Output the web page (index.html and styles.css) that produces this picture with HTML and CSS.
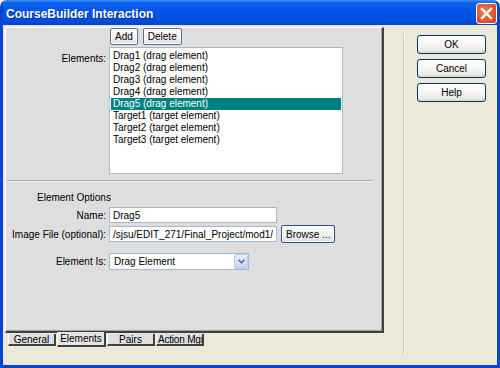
FILE: index.html
```html
<!DOCTYPE html>
<html lang="en">
<head>
    <meta charset="UTF-8">
    <title>CourseBuilder Interaction</title>
    <link rel="stylesheet" href="styles.css">
</head>
<body>
<div class="window">
    <div class="titlebar">
        <span class="title">CourseBuilder Interaction</span>
        <button class="close" type="button" aria-label="Close">
            <svg width="13" height="13" viewBox="0 0 13 13">
                <path d="M2 2 L11 11 M11 2 L2 11" stroke="#fff" stroke-width="2.4" stroke-linecap="square"/>
            </svg>
        </button>
    </div>
    <div class="frame">
        <div class="main">
            <div class="panel">
                <div class="toolbar">
                    <button type="button" class="small-btn">Add</button>
                    <button type="button" class="small-btn">Delete</button>
                </div>
                <div class="row row-list">
                    <label class="label label-list">Elements:</label>
                    <ul class="listbox">
                        <li>Drag1 (drag element)</li>
                        <li>Drag2 (drag element)</li>
                        <li>Drag3 (drag element)</li>
                        <li>Drag4 (drag element)</li>
                        <li class="selected">Drag5 (drag element)</li>
                        <li>Target1 (target element)</li>
                        <li>Target2 (target element)</li>
                        <li>Target3 (target element)</li>
                    </ul>
                </div>
                <div class="separator"></div>
                <div class="group-title">Element Options</div>
                <div class="row row-name">
                    <label class="label" for="name">Name:</label>
                    <input type="text" id="name" class="field field-name" value="Drag5">
                </div>
                <div class="row row-image">
                    <label class="label" for="image">Image File (optional):</label>
                    <input type="text" id="image" class="field field-name" value="/sjsu/EDIT_271/Final_Project/mod1/images/drag5.gif">
                    <button type="button" class="small-btn browse">Browse ...</button>
                </div>
                <div class="row row-kind">
                    <label class="label">Element Is:</label>
                    <div class="combo">
                        <span class="combo-text">Drag Element</span>
                        <span class="combo-arrow">
                            <svg width="7" height="5" viewBox="0 0 7 5">
                                <path d="M0.5 0.8 L3.5 3.8 L6.5 0.8" fill="none" stroke="#4d6185" stroke-width="1.4"/>
                            </svg>
                        </span>
                    </div>
                </div>
            </div>
            <div class="tabs">
                <div class="tab">General</div>
                <div class="tab active">Elements</div>
                <div class="tab">Pairs</div>
                <div class="tab tab-clip">Action Mgr</div>
            </div>
        </div>
        <div class="side">
            <div class="vline"></div>
            <div class="actions">
                <button type="button" class="xp-btn">OK</button>
                <button type="button" class="xp-btn">Cancel</button>
                <button type="button" class="xp-btn">Help</button>
            </div>
        </div>
    </div>
</div>
</body>
</html>
```

FILE: styles.css
```css
/* Global styles */
body {
    margin: 0;
    font-family: "Liberation Sans", Arial, sans-serif;
    font-size: 10px;
    color: #000;
    background: #fff;
}

button, input {
    font-family: inherit;
    font-size: inherit;
}

/* Window shell */
.window {
    width: 500px;
    height: 368px;
    box-sizing: border-box;
    background: #ece9d8;
    border: 3px solid #0a44d6;
    border-top: none;
    border-radius: 7px 7px 0 0;
    display: flex;
    flex-direction: column;
    overflow: hidden;
}

.titlebar {
    height: 25px;
    margin: 0 -3px;
    padding: 0 3px 0 6px;
    display: flex;
    align-items: center;
    justify-content: space-between;
    background: linear-gradient(#3b8bf7 0, #0a60ea 3px, #0055e5 45%, #004fe0 80%, #0044cc 100%);
    border-radius: 7px 7px 0 0;
}

.title {
    color: #fff;
    font-weight: bold;
    font-size: 12px;
    text-shadow: 1px 1px 0 #0a2d8a;
    margin-top: 2px;
}

.close {
    width: 21px;
    height: 21px;
    padding: 0;
    margin-top: 1px;
    border: 1px solid #fff;
    border-radius: 3px;
    background: radial-gradient(circle at 40% 40%, #ee7d5a 0, #e0532c 60%, #c9421d 100%);
    display: flex;
    align-items: center;
    justify-content: center;
}

/* Frame */
.frame {
    flex: 1;
    display: flex;
}

.main {
    padding: 2px 0 0 2px;
}

.panel {
    width: 379px;
    height: 306px;
    box-sizing: border-box;
    background: #dedede;
    border-top: 1px solid #fff;
    border-left: 1px solid #fff;
    border-right: 2px solid #404040;
    border-bottom: 2px solid #404040;
    box-shadow: inset -1px -1px 0 #a0a0a0;
}

.toolbar {
    display: flex;
    gap: 5px;
    margin: 0 0 2px 104px;
}

.small-btn {
    height: 17px;
    padding: 0 4px;
    background: linear-gradient(#ffffff, #eeeeee 70%, #dcdcdc);
    border: 1px solid #5d6f8c;
    border-radius: 2px;
    box-shadow: inset 0 0 0 1px #fff;
    color: #000;
    line-height: 13px;
}

.row {
    display: flex;
    align-items: center;
}

.label {
    width: 100px;
    padding-right: 3px;
    text-align: right;
    white-space: nowrap;
    flex-shrink: 0;
}

.row-list {
    align-items: flex-start;
}

.label-list {
    margin-top: 6px;
}

.listbox {
    list-style: none;
    margin: 0;
    padding: 1px;
    width: 234px;
    height: 127px;
    box-sizing: border-box;
    background: #fff;
    border: 1px solid #a5b9d3;
}

.listbox li {
    height: 12px;
    line-height: 12px;
    padding-left: 2px;
    white-space: nowrap;
}

.listbox li:first-child {
    margin-top: 1px;
}

.listbox .selected {
    background: #008080;
    color: #fff;
}

.separator {
    margin: 6px 0 0 1px;
    width: 365px;
    border-top: 1px solid #a8a8a8;
    border-bottom: 1px solid #f4f4f4;
}

.group-title {
    margin: 10px 0 0 31px;
    line-height: 12px;
}

.row-name {
    margin-top: 3px;
}

.field {
    height: 16px;
    box-sizing: border-box;
    border: 1px solid #a5b9d3;
    background: #fff;
    padding: 0 3px;
    color: #000;
    outline: none;
}

.field-name {
    width: 168px;
}

.row-image {
    margin-top: 2px;
}

.browse {
    margin-left: 4px;
    height: 18px;
    padding: 0 4px;
    border-color: #2a4f8a;
}

.row-kind {
    margin-top: 10px;
}

.combo {
    width: 140px;
    height: 17px;
    box-sizing: border-box;
    border: 1px solid #a5b9d3;
    background: #fff;
    display: flex;
    align-items: center;
    justify-content: space-between;
}

.combo-text {
    padding-left: 4px;
}

.combo-arrow {
    width: 14px;
    height: 15px;
    box-sizing: border-box;
    background: linear-gradient(#e6eefc, #c4d4f5);
    border: 1px solid #b9cbee;
    border-radius: 2px;
    display: flex;
    align-items: center;
    justify-content: center;
}

/* Tabs along the bottom */
.tabs {
    display: flex;
    gap: 1px;
    margin-left: 3px;
}

.tab {
    height: 12px;
    line-height: 11px;
    box-sizing: border-box;
    width: 48px;
    text-align: center;
    background: #dedede;
    border-left: 1px solid #fff;
    border-right: 2px solid #404040;
    border-bottom: 2px solid #404040;
    white-space: nowrap;
    overflow: hidden;
    margin-top: 1px;
}

.tab-clip {
    text-align: left;
    padding-left: 1px;
    letter-spacing: -0.2px;
}

.tab.active {
    height: 15px;
    line-height: 14px;
    margin-top: -1px;
    width: 49px;
    background: #e4e4e4;
}

/* Right-hand buttons */
.side {
    display: flex;
    padding-left: 19px;
}

.vline {
    margin-top: 8px;
    width: 1px;
    height: 322px;
    background: #cac7b8;
    border-right: 1px solid #fff;
}

.actions {
    margin: 10px 0 0 12px;
    display: flex;
    flex-direction: column;
    gap: 5px;
}

.xp-btn {
    width: 69px;
    height: 19px;
    padding: 0;
    border: 1px solid #003c74;
    border-radius: 3px;
    background: linear-gradient(#ffffff, #f4f3ee 60%, #e3e1d5);
    box-shadow: inset 0 -1px 0 #d6d0c5;
    color: #000;
}
```
